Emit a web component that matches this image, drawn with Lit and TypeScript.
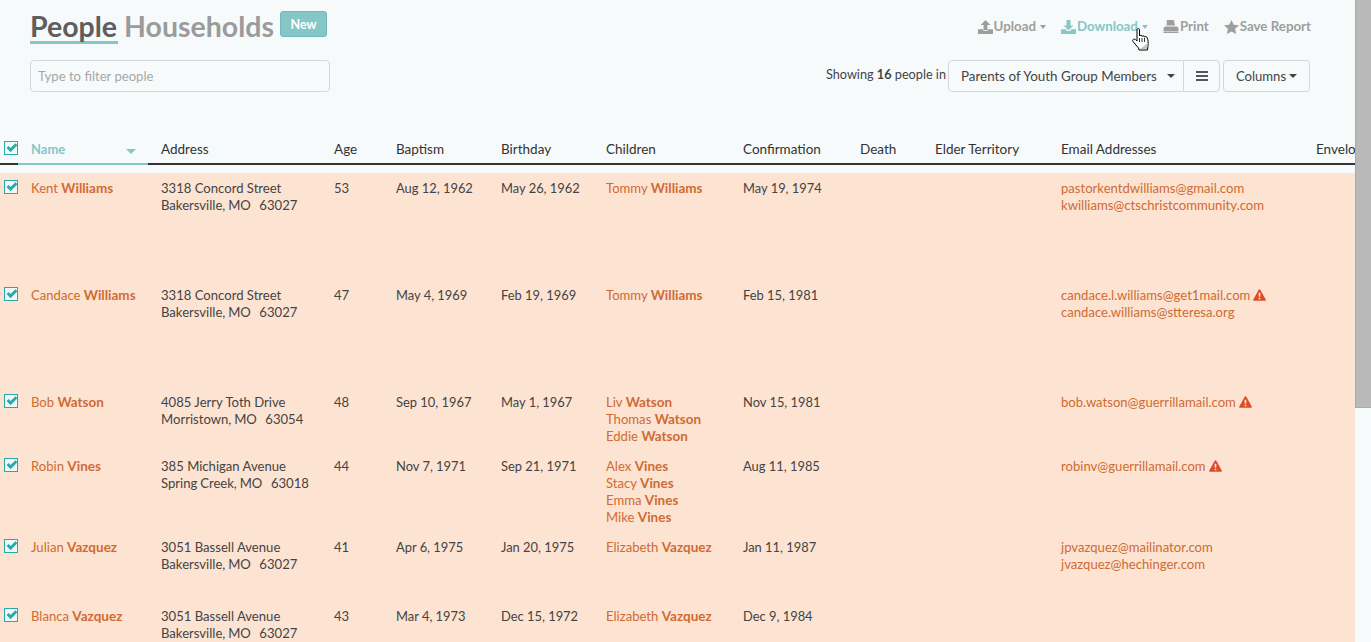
import { LitElement, html, css, svg } from "lit";
import { customElement } from "lit/decorators.js";

type Person = { f: string; l: string; a1: string; a2: string; age: string; bap: string; bd: string; kids: [string, string][]; conf: string; em: [string, boolean][]; h: number };
const P: Person[] = [
  { f: "Kent", l: "Williams", a1: "3318 Concord Street", a2: "Bakersville, MO\u00a0\u00a0 63027", age: "53", bap: "Aug 12, 1962", bd: "May 26, 1962", kids: [["Tommy", "Williams"]], conf: "May 19, 1974", em: [["pastorkentdwilliams@gmail.com", false], ["kwilliams@ctschristcommunity.com", false]], h: 107 },
  { f: "Candace", l: "Williams", a1: "3318 Concord Street", a2: "Bakersville, MO\u00a0\u00a0 63027", age: "47", bap: "May 4, 1969", bd: "Feb 19, 1969", kids: [["Tommy", "Williams"]], conf: "Feb 15, 1981", em: [["candace.l.williams@get1mail.com", true], ["candace.williams@stteresa.org", false]], h: 107 },
  { f: "Bob", l: "Watson", a1: "4085 Jerry Toth Drive", a2: "Morristown, MO\u00a0\u00a0 63054", age: "48", bap: "Sep 10, 1967", bd: "May 1, 1967", kids: [["Liv", "Watson"], ["Thomas", "Watson"], ["Eddie", "Watson"]], conf: "Nov 15, 1981", em: [["bob.watson@guerrillamail.com", true]], h: 64 },
  { f: "Robin", l: "Vines", a1: "385 Michigan Avenue", a2: "Spring Creek, MO\u00a0\u00a0 63018", age: "44", bap: "Nov 7, 1971", bd: "Sep 21, 1971", kids: [["Alex", "Vines"], ["Stacy", "Vines"], ["Emma", "Vines"], ["Mike", "Vines"]], conf: "Aug 11, 1985", em: [["robinv@guerrillamail.com", true]], h: 81 },
  { f: "Julian", l: "Vazquez", a1: "3051 Bassell Avenue", a2: "Bakersville, MO\u00a0\u00a0 63027", age: "41", bap: "Apr 6, 1975", bd: "Jan 20, 1975", kids: [["Elizabeth", "Vazquez"]], conf: "Jan 11, 1987", em: [["jpvazquez@mailinator.com", false], ["jvazquez@hechinger.com", false]], h: 69 },
  { f: "Blanca", l: "Vazquez", a1: "3051 Bassell Avenue", a2: "Bakersville, MO\u00a0\u00a0 63027", age: "43", bap: "Mar 4, 1973", bd: "Dec 15, 1972", kids: [["Elizabeth", "Vazquez"]], conf: "Dec 9, 1984", em: [], h: 69 },
];

const check = html`<span class="cb"><svg viewBox="0 0 12 10" width="12" height="10"><path d="M.6 5 L2.6 3 L4.6 5 L9.4 .2 L11.4 2.2 L4.6 9.2 Z" fill="#2aa9a9"/></svg></span>`;
const warn = html`<svg class="warn" viewBox="0 0 14 13" width="13" height="12"><path fill-rule="evenodd" d="M7 .3 C7.4 .3 7.7 .5 7.9 .8 L13.7 11.3 C14.1 12 13.6 12.8 12.8 12.8 L1.2 12.8 C.4 12.8 -.1 12 .3 11.3 L6.1 .8 C6.3 .5 6.6 .3 7 .3 Z M6 4 L6.2 8.4 L7.8 8.4 L8 4 Z M6.1 9.4 L6.1 11 L7.9 11 L7.9 9.4 Z" fill="#dd4b28"/></svg>`;
const tray = svg`<path d="M0 8.6 H5 V10.2 H9 V8.6 H14 V13 H0 Z"/>`;
const upIcon = html`<svg class="ic" viewBox="0 0 14 13" width="15" height="14" fill="currentColor">${tray}<path d="M7 0 L11.6 4.6 H8.8 V9.6 H5.2 V4.6 H2.4 Z"/></svg>`;
const downIcon = html`<svg class="ic" viewBox="0 0 14 13" width="15" height="14" fill="currentColor">${tray}<path d="M5.2 0 H8.8 V5 H11.6 L7 9.6 L2.4 5 H5.2 Z"/></svg>`;
const printIcon = html`<svg class="ic" viewBox="0 0 15 13" width="16" height="13" fill="currentColor"><path d="M3.4 0 H10.2 L11.6 5.6 H3 Z M2.2 6.4 H12.8 C14 6.4 15 7.4 15 8.6 V11 H0 V8.6 C0 7.4 1 6.4 2.2 6.4 Z M0 11.6 H15 V13 H0 Z"/></svg>`;
const star = html`<svg class="ic" viewBox="0 0 16 15" width="15" height="14" fill="currentColor"><path d="M8 0 L10.4 5 L16 5.7 L11.9 9.5 L13 15 L8 12.3 L3 15 L4.1 9.5 L0 5.7 L5.6 5 Z"/></svg>`;
const caret = html`<span class="caret"></span>`;

@customElement("app-root")
export class AppRoot extends LitElement {
  static styles = css`
    :host { display: flex; width: 1371px; height: 642px; overflow: hidden; background: #f6fafb; font-family: Lato, "Open Sans", sans-serif; font-size: 13.1px; line-height: 17px; color: #444; position: relative; }
    .page { width: 1355px; flex: none; overflow: hidden; }
    .bar { width: 16px; flex: none; }
    .thumb { height: 408px; background: #b9b9b9; border-left: 1px solid #aaa; border-bottom: 1px solid #aaa; box-sizing: border-box; }
    .top { display: flex; justify-content: space-between; padding: 11px 45px 0 30px; height: 130px; box-sizing: border-box; }
    .titles { display: flex; align-items: flex-start; }
    .title { font-size: 28.5px; line-height: 30px; font-weight: 700; color: #9b9b9b; margin-right: 6px; }
    .title.on { color: #5e5e5e; border-bottom: 3px solid #85c7c7; height: 30px; padding-right: 1px; }
    .badge { background: #85c7c7; border: 1px solid #73b8ba; border-radius: 3px; color: #fff; font-weight: 700; font-size: 12.5px; width: 47px; height: 26px; box-sizing: border-box; display: flex; align-items: center; justify-content: center; }
    .filter { margin-top: 16px; width: 300px; height: 32px; box-sizing: border-box; border: 1px solid #d6d6d6; border-radius: 4px; padding: 7px; color: #a8a8a8; }
    .right { display: flex; flex-direction: column; align-items: flex-end; }
    .actions { display: flex; gap: 15px; height: 30px; padding-top: 7px; box-sizing: border-box; color: #a09e9c; font-weight: 700; font-size: 13.3px; margin-right: -1px; }
    .act { display: flex; align-items: center; gap: 1px; height: 17px; }
    .act.hot { color: #85c7c7; }
    .act .caret { border-width: 4px 3.5px 0; }
    .ic { flex: none; }
    .caret { display: inline-block; width: 0; height: 0; border: 4px solid transparent; border-top-color: currentColor; border-bottom: 0; margin-left: 3px; vertical-align: 2px; }
    .tools { display: flex; align-items: center; margin-top: 19px; color: #444; white-space: nowrap; }
    .showing { margin: -4px 2px 0 0; font-size: 12.7px; }
    .group { display: flex; height: 32px; box-sizing: border-box; border: 1px solid #d6d6d6; border-radius: 4px; align-items: center; }
    .sel { width: 235px; box-sizing: border-box; padding: 0 8px 0 12px; display: flex; justify-content: space-between; align-items: center; height: 100%; border-right: 1px solid #d6d6d6; font-size: 13.4px; }
    .burger { width: 35px; display: flex; justify-content: center; }
    .cols { margin-left: 3px; width: 87px; justify-content: center; }
    .row { display: grid; grid-template-columns: 18px 130px 173px 62px 105px 105px 137px 117px 75px 126px 255px 52px; }
    .cell { padding-left: 13px; white-space: nowrap; overflow: hidden; }
    .chk { padding: 0; overflow: visible; }
    .cb { display: block; position: relative; margin: 0 0 0 4px; width: 14px; height: 14px; box-sizing: border-box; border: 1px solid #2aa9a9; background: #f2f8f8; }
    .cb svg { position: absolute; left: 1px; top: 1px; }
    .head { border-bottom: 2px solid #333; box-sizing: border-box; margin-bottom: 8px; height: 35px; color: #333; padding-top: 11px; font-size: 13.5px; }
    .head .cell { height: 22px; }
    .head .name { border-bottom: 2px solid #85c7c7; color: #85c7c7; font-weight: 700; display: flex; justify-content: space-between; padding-right: 12px; height: 24px; box-sizing: border-box; overflow: visible; font-size: 13px; }
    .sort { border: 5px solid transparent; border-top-color: #85c7c7; border-bottom: 0; width: 0; height: 0; margin-top: 8px; }
    .person { background: #fde3d2; box-sizing: border-box; padding-top: 7px; }
    .link { color: #cf6b33; display: block; height: 17px; }
    .link b { font-weight: 700; font-size: 13.5px; line-height: 1; }
    .date { font-size: 12.9px; }
    .csz { word-spacing: -0.5px; }
    .warn { margin-left: 3px; vertical-align: -1px; }
    .rows { width: 1355px; }
    .hand { position: absolute; left: 1132px; top: 28px; }
  `;

  render() {
    return html`
      <div class="page">
        <div class="top">
          <div>
            <div class="titles">
              <span class="title on">People</span>
              <span class="title">Households</span>
              <span class="badge">New</span>
            </div>
            <div class="filter">Type to filter people</div>
          </div>
          <div class="right">
            <div class="actions">
              <span class="act">${upIcon}Upload${caret}</span>
              <span class="act hot">${downIcon}Download${caret}</span>
              <span class="act">${printIcon}Print</span>
              <span class="act">${star}Save Report</span>
            </div>
            <div class="tools">
              <span class="showing">Showing <b>16</b> people in</span>
              <div class="group">
                <div class="sel"><span>Parents of Youth Group Members</span>${caret}</div>
                <div class="burger"><svg width="12" height="10" viewBox="0 0 12 10" fill="#555"><rect width="12" height="2"/><rect y="4" width="12" height="2"/><rect y="8" width="12" height="2"/></svg></div>
              </div>
              <div class="group cols">Columns${caret}</div>
            </div>
          </div>
        </div>
        <div class="row head">
          <div class="cell chk">${check}</div>
          <div class="cell name"><span>Name</span><span class="sort"></span></div>
          ${["Address", "Age", "Baptism", "Birthday", "Children", "Confirmation", "Death", "Elder Territory", "Email Addresses", "Envelope"].map((t) => html`<div class="cell">${t}</div>`)}
        </div>
        <div class="rows">
          ${P.map((p) => html`
            <div class="row person" style="height:${p.h}px">
              <div class="cell chk">${check}</div>
              <div class="cell"><span class="link">${p.f} <b>${p.l}</b></span></div>
              <div class="cell">${p.a1}<br /><span class="csz">${p.a2}</span></div>
              <div class="cell">${p.age}</div>
              <div class="cell date">${p.bap}</div>
              <div class="cell date">${p.bd}</div>
              <div class="cell">${p.kids.map((k) => html`<span class="link">${k[0]} <b>${k[1]}</b></span>`)}</div>
              <div class="cell date">${p.conf}</div>
              <div class="cell"></div>
              <div class="cell"></div>
              <div class="cell">${p.em.map((e) => html`<span class="link">${e[0]}${e[1] ? warn : ""}</span>`)}</div>
              <div class="cell"></div>
            </div>`)}
        </div>
      </div>
      <div class="bar"><div class="thumb"></div></div>
      <svg class="hand" width="18" height="23" viewBox="0 0 18 23"><path d="M5 1.5 C5 .3 7.5 .3 7.5 1.5 V8 C8 6.8 10 7 10 8.5 C10.6 7.4 12.4 7.7 12.5 9 C13.2 8.2 15 8.6 15.2 10 C16.2 12 16.4 15 16 17.5 L15.5 22 H7 L6.5 20 L1 13.5 C0 11.8 2 10.3 3.4 11.5 L5 13 Z" fill="#fff" stroke="#000"/><path d="M8 21 L15 21 L15.5 15 Z" fill="#c8c8c8"/><path d="M7.5 10 V14 M10 10 V14 M12.5 10 V14" stroke="#000" stroke-width=".8"/></svg>
    `;
  }
}
